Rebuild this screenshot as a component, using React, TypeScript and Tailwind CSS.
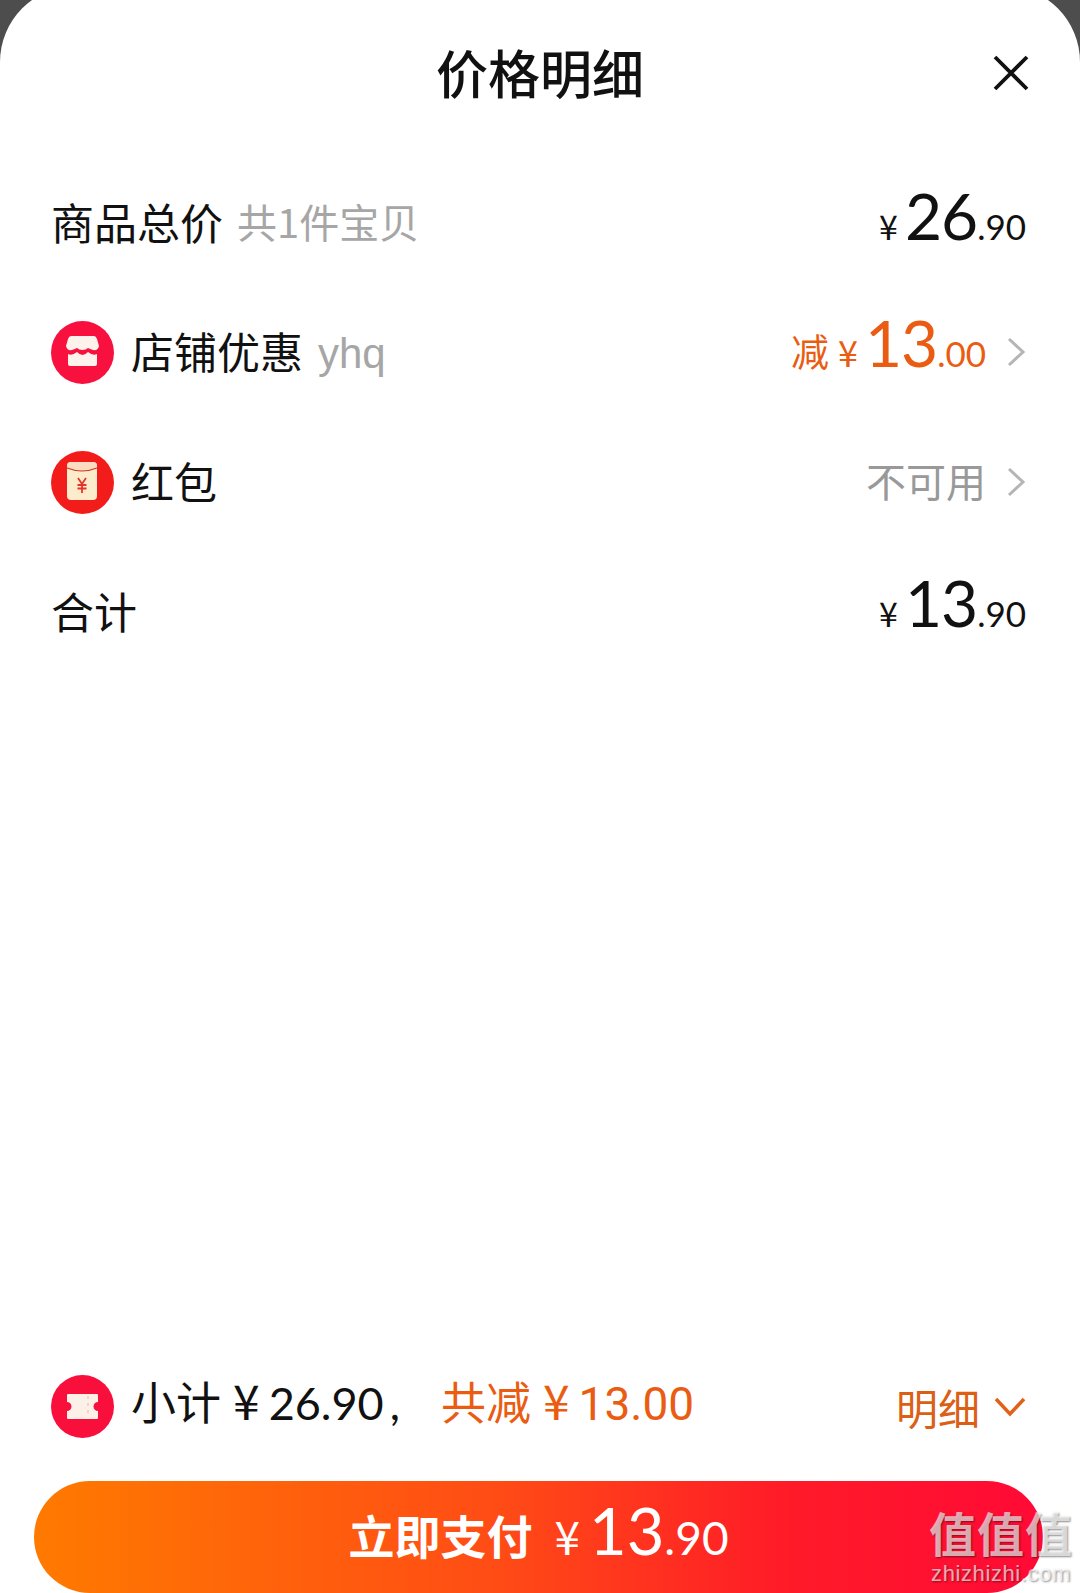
import React from "react";

const CJK = "font-['Noto_Sans_CJK_SC','Noto_Sans',sans-serif]";
const NUM = "font-['Lato','Noto_Sans_CJK_SC',sans-serif]";
const YEN = "font-['Noto_Sans_CJK_SC',sans-serif]";

function Price({ big, small, yen = "text-[34px]" }: { big: string; small: string; yen?: string }) {
  return (
    <span className={`flex items-baseline ${NUM}`}>
      <span className={`${yen} ${YEN} mr-[7px]`}>¥</span>
      <span className="text-[64px] leading-none tracking-[-1px]">{big}</span>
      <span className="text-[35px] leading-none">{small}</span>
    </span>
  );
}

function Chevron() {
  return (
    <svg width="20" height="32" viewBox="0 0 20 32" className="ml-[20px]" fill="none">
      <path d="M3 3 L17 16 L3 29" stroke="#b5b5b5" strokeWidth="3" />
    </svg>
  );
}

function Circle({ color, children }: { color: string; children: React.ReactNode }) {
  return (
    <svg width="63" height="63" viewBox="0 0 63 63" className="shrink-0">
      <circle cx="31.5" cy="31.5" r="31.5" fill={color} />
      {children}
    </svg>
  );
}

export default function App() {
  return (
    <div className={`w-[1080px] h-[1593px] overflow-hidden bg-[#4d4d4d] relative ${CJK}`}>
      <div className="w-full h-[1607px] -mt-[14px] pt-[14px] bg-white rounded-t-[76px] flex flex-col text-[#111111]">
        <header className="h-[157px] shrink-0 relative flex items-center justify-center pb-[14px]">
          <h1 className="text-[52px] font-medium leading-none">价格明细</h1>
          <svg width="36" height="36" viewBox="0 0 36 36" className="absolute left-[993px] top-[55px]" fill="none">
            <path d="M2 2 L34 34 M34 2 L2 34" stroke="#111" strokeWidth="3.8" />
          </svg>
        </header>

        <section className="pl-[51px] pr-[54px]">
          <div className="h-[130px] flex items-center justify-between">
            <div className="flex items-center text-[43px] leading-none -mt-[2px]">
              <span>商品总价</span>
              <span className="ml-[14px] text-[#a6a6a6] text-[40px]">共1件宝贝</span>
            </div>
            <div className="-mt-[10px]"><Price big="26" small=".90" /></div>
          </div>

          <div className="h-[130px] flex items-center justify-between">
            <div className="flex items-center text-[43px] leading-none">
              <Circle color="#f8113f">
                <path d="M20 15 H43 Q45 15 46 18 L48 25 Q47 30 42 29 Q39 28 37 27 Q35 29 31.5 29 Q28 29 26 27 Q24 28 21 29 Q16 30 15 25 L17 18 Q18 15 20 15 Z" fill="#fdf2ec" />
                <path d="M17 33 Q21 35 26 31 Q29 34 31.5 34 Q34 34 37 31 Q42 35 46 33 V43 Q46 45 44 45 H19 Q17 45 17 43 Z" fill="#fdf2ec" />
              </Circle>
              <span className="ml-[17px] -mt-[3px]">店铺优惠</span>
              <span className="ml-[15px] mt-[4px] text-[#a6a6a6] text-[42px] font-['Liberation_Sans',sans-serif]">yhq</span>
            </div>
            <div className="flex items-center text-[#ea5c12]">
              <span className="text-[38px] leading-none mr-[9px] -mt-[5px]">减</span>
              <div className="-mt-[15px]"><Price big="13" small=".00" yen="text-[36px]" /></div>
              <Chevron />
            </div>
          </div>

          <div className="h-[130px] flex items-center justify-between">
            <div className="flex items-center text-[43px] leading-none">
              <Circle color="#f21d1a">
                <rect x="16" y="11" width="30" height="38" rx="4" fill="#fdeccb" />
                <path d="M16 17 Q31 23 46 17 V15 Q46 11 42 11 H20 Q16 11 16 15 Z" fill="#fbdcc0" />
                <path d="M16 17 Q31 23 46 17" stroke="#c93a24" strokeWidth="1.2" fill="none" />
                <path d="M27 27 L31 33 L35 27 M26.5 34 H35.5 M26.5 37.5 H35.5 M31 33 V42" stroke="#e5342a" strokeWidth="1.8" fill="none" />
              </Circle>
              <span className="ml-[17px] -mt-[3px]">红包</span>
            </div>
            <div className="flex items-center">
              <span className="text-[40px] leading-none text-[#999999] -mt-[4px]">不可用</span>
              <Chevron />
            </div>
          </div>

          <div className="h-[130px] flex items-center justify-between">
            <span className="text-[43px] leading-none -mt-[3px]">合计</span>
            <div className="-mt-[16px]"><Price big="13" small=".90" /></div>
          </div>
        </section>

        <div className="flex-1" />

        <section className="pl-[51px] pr-[54px] flex items-center justify-between text-[45px] leading-none mb-[43px]">
          <div className="flex items-center">
            <Circle color="#f80f3c">
              <path d="M16 20 Q16 19 17 19 H46 Q47 19 47 20 V27 A4.5 4.5 0 0 0 47 36 V43 Q47 44 46 44 H17 Q16 44 16 43 V36 A4.5 4.5 0 0 0 16 27 Z" fill="#fdf0e8" />
              <path d="M37 21 V42" stroke="#e9c9bd" strokeWidth="1.5" strokeDasharray="3 4" />
            </Circle>
            <span className="ml-[17px] -mt-[12px] flex items-baseline">
              小计
              <span className={`${NUM} ml-[12px] text-[45px] whitespace-pre`}>
                <span className={`${YEN} text-[48px] mr-[9px]`}>¥</span>26.90<span className="ml-[6px]">,</span>
              </span>
            </span>
            <span className="text-[#ea5c12] -mt-[12px] ml-[41px] flex items-baseline">
              共减
              <span className="font-['Roboto',sans-serif] ml-[12px] text-[46px]">
                <span className={`${YEN} text-[48px] mr-[9px]`}>¥</span>13.00
              </span>
            </span>
          </div>
          <div className="flex items-center text-[#dc5f16]">
            <span className="text-[42px]">明细</span>
            <svg width="32" height="22" viewBox="0 0 32 22" className="ml-[14px]" fill="none">
              <path d="M2 3 L16 18 L30 3" stroke="#e0621a" strokeWidth="3.5" />
            </svg>
          </div>
        </section>

        <div className="ml-[34px] w-[1009px] h-[112px] shrink-0 rounded-full bg-[linear-gradient(90deg,#ff7a00,#ff4d15_45%,#ff1a28_75%,#ff0a36)] text-white flex items-center justify-center pb-[6px]">
          <span className="text-[46px] font-bold leading-none">立即支付</span>
          <span className={`ml-[22px] flex items-baseline ${NUM}`}>
            <span className={`text-[46px] mr-[9px] ${YEN}`}>¥</span>
            <span className="text-[65px] leading-none">13</span>
            <span className="text-[46px] leading-none">.90</span>
          </span>
        </div>
      </div>

      <div className="absolute left-[926px] top-[1508px] w-[150px] flex flex-col items-center text-white/65 [text-shadow:1px_1px_2px_rgba(0,0,0,0.45)]">
        <span className="text-[47px] font-bold leading-none tracking-[1px]">值值值</span>
        <span className="text-[22px] leading-none mt-[8px] tracking-[0.6px] font-['Liberation_Sans',sans-serif]">zhizhizhi.com</span>
      </div>
    </div>
  );
}
